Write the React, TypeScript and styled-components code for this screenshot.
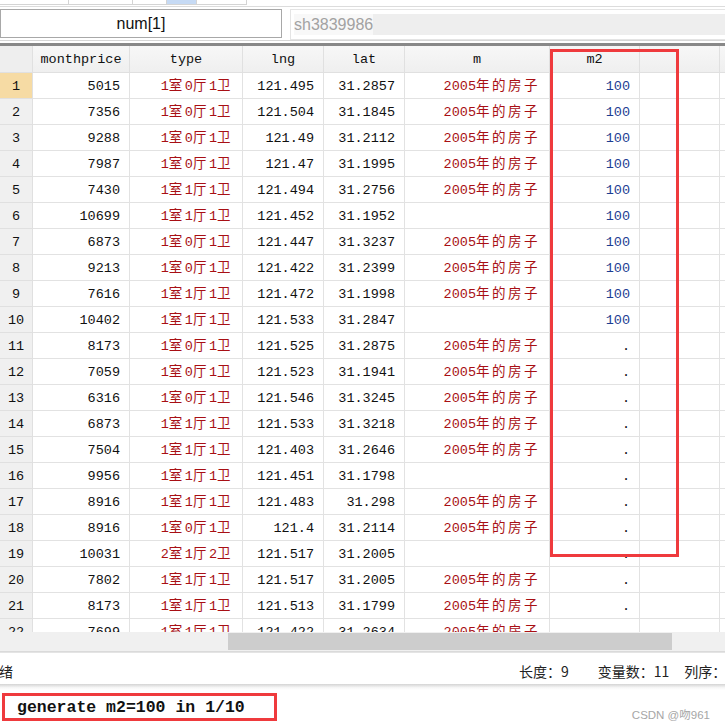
import React from 'react';
import styled, { createGlobalStyle } from 'styled-components';

type Row = [string, string, string, string, string, string];

const rows: Row[] = [
  ['5015', '1室0厅1卫', '121.495', '31.2857', '2005年的房子', '100'],
  ['7356', '1室0厅1卫', '121.504', '31.1845', '2005年的房子', '100'],
  ['9288', '1室0厅1卫', '121.49', '31.2112', '2005年的房子', '100'],
  ['7987', '1室0厅1卫', '121.47', '31.1995', '2005年的房子', '100'],
  ['7430', '1室1厅1卫', '121.494', '31.2756', '2005年的房子', '100'],
  ['10699', '1室1厅1卫', '121.452', '31.1952', '', '100'],
  ['6873', '1室0厅1卫', '121.447', '31.3237', '2005年的房子', '100'],
  ['9213', '1室0厅1卫', '121.422', '31.2399', '2005年的房子', '100'],
  ['7616', '1室1厅1卫', '121.472', '31.1998', '2005年的房子', '100'],
  ['10402', '1室1厅1卫', '121.533', '31.2847', '', '100'],
  ['8173', '1室0厅1卫', '121.525', '31.2875', '2005年的房子', '.'],
  ['7059', '1室0厅1卫', '121.523', '31.1941', '2005年的房子', '.'],
  ['6316', '1室0厅1卫', '121.546', '31.3245', '2005年的房子', '.'],
  ['6873', '1室1厅1卫', '121.533', '31.3218', '2005年的房子', '.'],
  ['7504', '1室1厅1卫', '121.403', '31.2646', '2005年的房子', '.'],
  ['9956', '1室1厅1卫', '121.451', '31.1798', '', '.'],
  ['8916', '1室1厅1卫', '121.483', '31.298', '2005年的房子', '.'],
  ['8916', '1室0厅1卫', '121.4', '31.2114', '2005年的房子', '.'],
  ['10031', '2室1厅2卫', '121.517', '31.2005', '', '.'],
  ['7802', '1室1厅1卫', '121.517', '31.2005', '2005年的房子', '.'],
  ['8173', '1室1厅1卫', '121.513', '31.1799', '2005年的房子', '.'],
  ['7699', '1室1厅1卫', '121.422', '31.2634', '2005年的房子', '.'],
];

const headers = ['', 'monthprice', 'type', 'lng', 'lat', 'm', 'm2', '', ''];

// split a string into ascii / han runs so the han glyphs get the wide advance
function renderMixed(text: string) {
  const parts = text.match(/[\u4e00-\u9fff]+|[^\u4e00-\u9fff]+/g) || [];
  return (
    <CellText>
      {parts.map((p, i) =>
        /[\u4e00-\u9fff]/.test(p) ? <Han key={i}>{p}</Han> : <React.Fragment key={i}>{p}</React.Fragment>
      )}
    </CellText>
  );
}

export default function App() {
  return (
    <>
      <GlobalStyle />
      <Page>
        <TopStrip>
          <Tab $w={69} />
          <Tab $w={64} />
          <Tab $w={34} />
          <Tab $w={30} $active />
          <Tab $w={50} />
        </TopStrip>

        <VarBar>
          <NameBox>num[1]</NameBox>
          <ValueBox>
            <ValueField>
              <ValueText>sh3839986</ValueText>
            </ValueField>
          </ValueBox>
        </VarBar>

        <Divider />

        <GridArea>
          <Grid>
            {headers.map((h, i) => (
              <HeaderCell key={i} $first={i === 0}>
                {h}
              </HeaderCell>
            ))}
            {rows.map((r, ri) => (
              <React.Fragment key={ri}>
                <RowNum $active={ri === 0}>{ri + 1}</RowNum>
                <Cell>{r[0]}</Cell>
                <Cell $tone="str">{renderMixed(r[1])}</Cell>
                <Cell>{r[2]}</Cell>
                <Cell>{r[3]}</Cell>
                <Cell $tone="str">{renderMixed(r[4])}</Cell>
                <Cell $tone={r[5] === '.' ? 'num' : 'gen'}>{r[5]}</Cell>
                <Cell />
                <Cell />
              </React.Fragment>
            ))}
          </Grid>
          <Highlight />
        </GridArea>

        <HScroll>
          <Thumb />
        </HScroll>

        <StatusBar>
          <StatusText $gap={-1}>绪</StatusText>
          <StatusText $gap={506}>长度：9</StatusText>
          <StatusText $gap={29}>变量数：11</StatusText>
          <StatusText $gap={15}>列序：</StatusText>
        </StatusBar>
        <Shadow />

        <CommandBar>
          <Command>generate m2=100 in 1/10</Command>
          <Watermark>CSDN @吻961</Watermark>
        </CommandBar>
      </Page>
    </>
  );
}

const GlobalStyle = createGlobalStyle`
  html, body {
    margin: 0;
    padding: 0;
    background: #ffffff;
    overflow: hidden;
  }
  * {
    box-sizing: border-box;
  }
`;

const Page = styled.div`
  width: 725px;
  height: 727px;
  display: flex;
  flex-direction: column;
  overflow: hidden;
  background: #fff;
  font-family: 'Liberation Sans', 'Noto Sans CJK SC', sans-serif;
`;

const TopStrip = styled.div`
  height: 7px;
  display: flex;
  border-bottom: 1px solid #dcdcdc;
`;

const Tab = styled.div<{ $w: number; $active?: boolean }>`
  width: ${(p) => p.$w}px;
  height: 5px;
  border-right: 1px solid #d4d4d4;
  border-bottom: 1px solid #d4d4d4;
  background: ${(p) => (p.$active ? '#c6daf4' : '#fff')};
`;

const VarBar = styled.div`
  height: 33px;
  display: flex;
  align-items: flex-start;
  padding-top: 2px;
`;

const NameBox = styled.div`
  width: 282px;
  height: 29px;
  border: 1px solid #a8a8a8;
  display: flex;
  align-items: center;
  justify-content: center;
  font-size: 16px;
  color: #111;
`;

const ValueBox = styled.div`
  flex: 1;
  margin-left: 8px;
  height: 31px;
  border: 1px solid #e4e4e4;
  border-right: none;
  padding: 4px 0 4px 3px;
`;

const ValueField = styled.div`
  height: 21px;
  background: #eeeeee;
  display: flex;
  align-items: center;
`;

const ValueText = styled.span`
  height: 100%;
  display: flex;
  align-items: center;
  background: #f8f8f8;
  font-size: 16px;
  color: #a2a2a2;
`;

const Divider = styled.div`
  height: 6px;
  border-top: 1px solid #d6d6d6;
  border-bottom: 3px solid #888888;
`;

const GridArea = styled.div`
  position: relative;
  height: 586px;
  overflow: hidden;
`;

const Grid = styled.div`
  display: grid;
  grid-template-columns: 33px 97px 113px 81px 81px 145px 90px 80px 1fr;
  grid-auto-rows: 26px;
  grid-template-rows: 27px;
  font-family: 'Liberation Mono', 'Noto Sans CJK SC', monospace;
  font-size: 13.5px;
`;

const HeaderCell = styled.div<{ $first?: boolean }>`
  display: flex;
  align-items: center;
  justify-content: center;
  padding-top: 1px;
  background: ${(p) => (p.$first ? '#eeeeee' : 'linear-gradient(#f7f7f7, #efefef)')};
  border-right: 1px solid #e0e0e0;
  border-bottom: 1px solid #e0e0e0;
  color: #111;
`;

const RowNum = styled.div<{ $active?: boolean }>`
  display: flex;
  align-items: center;
  justify-content: center;
  padding-top: 1px;
  background: ${(p) => (p.$active ? '#f6dba4' : '#f0f0f0')};
  border-right: 1px solid #e0e0e0;
  border-bottom: 1px solid #e0e0e0;
  color: #111;
`;

const toneColor = {
  num: '#111111',
  str: '#a80f14',
  gen: '#1d3d92',
};

const Cell = styled.div<{ $tone?: keyof typeof toneColor }>`
  display: flex;
  align-items: center;
  justify-content: flex-end;
  padding: 1px 9px 0 0;
  white-space: nowrap;
  border-right: 1px solid #e2e2e2;
  border-bottom: 1px solid #e2e2e2;
  color: ${(p) => toneColor[p.$tone || 'num']};
`;

const CellText = styled.span`
  line-height: 1;
`;

const Han = styled.span`
  font-family: 'Noto Sans CJK SC', sans-serif;
  font-size: 13.5px;
  letter-spacing: 2.5px;
`;

const Highlight = styled.div`
  position: absolute;
  left: 550px;
  top: 3px;
  width: 129px;
  height: 508px;
  border: 3px solid #ef3a3d;
  pointer-events: none;
`;

const HScroll = styled.div`
  height: 20px;
  background: #f0f0f0;
  padding-top: 1px;
  border-bottom: 1px solid #dadada;
`;

const Thumb = styled.div`
  margin-left: 228px;
  width: 444px;
  height: 17px;
  background: #cdcdcd;
`;

const StatusBar = styled.div`
  height: 32px;
  display: flex;
  align-items: center;
  padding-top: 5px;
  border-top: 1px solid #e4e4e4;
  white-space: nowrap;
  overflow: hidden;
  font-family: 'Noto Sans CJK SC', sans-serif;
  font-size: 14px;
  color: #222;
`;

const StatusText = styled.span<{ $gap: number }>`
  margin-left: ${(p) => p.$gap}px;
  flex-shrink: 0;
`;

const Shadow = styled.div`
  height: 6px;
  background: linear-gradient(#d4d4d4, #f6f6f6 60%, #ffffff);
`;

const CommandBar = styled.div`
  flex: 1;
  display: flex;
  align-items: flex-start;
  padding: 3px 0 0 2px;
`;

const Command = styled.div`
  width: 275px;
  height: 28px;
  border: 3px solid #ef3a3d;
  padding-left: 12px;
  display: flex;
  align-items: center;
  font-family: 'Liberation Mono', monospace;
  font-weight: bold;
  font-size: 16.5px;
  color: #111;
  white-space: nowrap;
`;

const Watermark = styled.div`
  margin-left: auto;
  margin-right: 15px;
  margin-top: 13px;
  font-family: 'Liberation Sans', 'Noto Sans CJK SC', sans-serif;
  font-size: 11.5px;
  color: #a6a6a6;
`;
